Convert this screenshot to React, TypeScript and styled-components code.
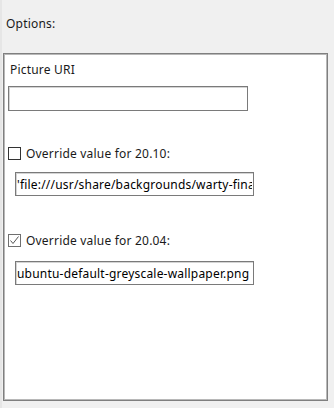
import styled, { createGlobalStyle } from "styled-components";

const GlobalStyle = createGlobalStyle`
  html, body {
    margin: 0;
    padding: 0;
    background: #f0f0f0;
  }
`;

const Page = styled.div`
  box-sizing: border-box;
  width: 334px;
  height: 408px;
  padding: 16px 6px 0 1px;
  background: #f0f0f0;
  border-left: 2px solid #e6e6e6;
  font-family: "Segoe UI", "Noto Sans", sans-serif;
  font-size: 12px;
  letter-spacing: 0.2px;
  color: #1a1a1a;
  display: flex;
  flex-direction: column;
`;

const Caption = styled.div`
  line-height: 16px;
  padding-left: 3px;
`;

const Panel = styled.div`
  box-sizing: border-box;
  width: 325px;
  height: 348px;
  margin-top: 21px;
  background: #fff;
  border: 1px solid #7f7f7f;
  box-shadow: inset 1px 1px 0 #b8b8b8, inset -1px -1px 0 #b8b8b8;
  padding: 8px 0 0 4px;
  display: flex;
  flex-direction: column;
`;

const FieldLabel = styled.div`
  line-height: 16px;
  padding-left: 2px;
`;

interface InputProps {
  $indent?: number;
  $gap: number;
}

const TextInput = styled.input.attrs({ type: "text", readOnly: true })<InputProps>`
  box-sizing: border-box;
  width: ${(p) => (p.$indent ? 239 : 240)}px;
  height: ${(p) => (p.$indent ? 24 : 25)}px;
  margin: ${(p) => p.$gap}px 0 0 ${(p) => p.$indent ?? 0}px;
  padding: 0 1px;
  border: 1px solid #7a7a7a;
  box-shadow: inset 1px 1px 0 #d4d4d4;
  border-radius: 0;
  outline: none;
  background: #fff;
  font: inherit;
  letter-spacing: inherit;
  color: #000;
`;

const CheckRow = styled.label<{ $gap: number }>`
  display: flex;
  align-items: center;
  gap: 5px;
  height: 16px;
  margin-top: ${(p) => p.$gap}px;
`;

const Box = styled.span<{ $checked?: boolean }>`
  box-sizing: border-box;
  width: 13px;
  height: 13px;
  border: 1px solid ${(p) => (p.$checked ? "#6f6f6f" : "#333")};
  background: #fff;
  display: flex;
  align-items: center;
  justify-content: center;
`;

const Check = ({ checked }: { checked?: boolean }) => (
  <Box $checked={checked}>
    {checked && (
      <svg width="11" height="11" viewBox="0 0 11 11">
        <path d="M1.5 5.5 L4 8.5 L9.5 1.5" fill="none" stroke="#555" strokeWidth="1" />
      </svg>
    )}
  </Box>
);

export default function App() {
  return (
    <>
      <GlobalStyle />
      <Page>
        <Caption>Options:</Caption>
        <Panel>
          <FieldLabel>Picture URI</FieldLabel>
          <TextInput $gap={8} defaultValue="" />
          <CheckRow $gap={34}>
            <Check />
            Override value for 20.10:
          </CheckRow>
          <TextInput
            $gap={11}
            $indent={7}
            defaultValue="'file:///usr/share/backgrounds/warty-final-ubuntu.png'"
          />
          <CheckRow $gap={36}>
            <Check checked />
            Override value for 20.04:
          </CheckRow>
          <TextInput $gap={13} $indent={7} defaultValue="ubuntu-default-greyscale-wallpaper.png" />
        </Panel>
      </Page>
    </>
  );
}
